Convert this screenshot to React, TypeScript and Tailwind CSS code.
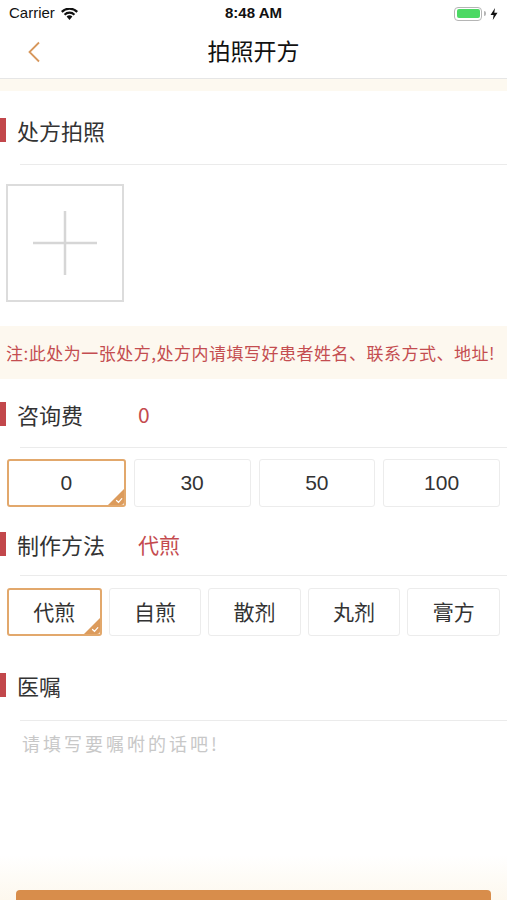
import React from 'react';

const cjk = { fontFamily: '"Noto Sans CJK SC", "Noto Sans", sans-serif' };
const latin = { fontFamily: '"Liberation Sans", "Noto Sans CJK SC", sans-serif' };

const SectionHeader: React.FC<{ label: string; value?: string }> = ({ label, value }) => (
  <div className="flex items-center h-[24px]">
    <div className="w-[6px] h-[24px] bg-[#c2474b]" />
    <div className="w-[121px] ml-[11px] text-[22px] text-[#333] leading-none" style={cjk}>
      {label}
    </div>
    {value && (
      <div className="text-[21px] text-[#c44a4e] leading-none" style={cjk}>
        {value}
      </div>
    )}
  </div>
);

const Divider = () => <div className="ml-[20px] h-px bg-[#ebebeb]" />;

const Check = () => (
  <svg className="absolute right-0 bottom-0" width="16" height="16" viewBox="0 0 16 16">
    <path d="M16 0 L16 13 Q16 16 13 16 L0 16 Z" fill="#dc9b5c" />
    <path d="M8.5 11.5 L10.5 13.3 L13.8 9.6" fill="none" stroke="#fff" strokeWidth="1.2" strokeLinecap="round" />
  </svg>
);

const Option: React.FC<{ text: string; selected?: boolean; numeric?: boolean }> = ({ text, selected, numeric }) => (
  <div
    className={`relative flex-1 h-[48px] rounded-[3px] flex items-center justify-center text-[21px] text-[#333] ${
      selected ? 'border-2 border-[#e2a86c]' : 'border border-[#ececec]'
    }`}
    style={numeric ? latin : cjk}
  >
    {text}
    {selected && <Check />}
  </div>
);

const App: React.FC = () => {
  const fees = ['0', '30', '50', '100'];
  const methods = ['代煎', '自煎', '散剂', '丸剂', '膏方'];

  return (
    <div className="w-[507px] h-[900px] overflow-hidden bg-white flex flex-col">
      {/* status bar */}
      <div className="h-[27px] grid grid-cols-3 items-center px-[9px] text-[#111]" style={latin}>
        <div className="flex items-center gap-[6px] text-[15px]">
          <span>Carrier</span>
          <svg width="17" height="12" viewBox="0 0 17 12">
            <path d="M8.5 12 L5.6 8.6 A4.4 4.4 0 0 1 11.4 8.6 Z" fill="#111" />
            <path d="M2.8 5.9 A8 8 0 0 1 14.2 5.9 L12.7 7.5 A5.8 5.8 0 0 0 4.3 7.5 Z" fill="#111" />
            <path d="M0 3.1 A12 12 0 0 1 17 3.1 L15.5 4.7 A9.8 9.8 0 0 0 1.5 4.7 Z" fill="#111" />
          </svg>
        </div>
        <div className="text-[15px] font-bold text-center">8:48 AM</div>
        <div className="flex items-center justify-end gap-[2px]">
          <div className="w-[28px] h-[14px] rounded-[4px] border border-[#b5b5b5] p-[1.5px]">
            <div className="w-full h-full rounded-[2px] bg-[#4cd964]" />
          </div>
          <div className="w-[2px] h-[5px] bg-[#b5b5b5] rounded-r-sm" />
          <svg width="8" height="12" viewBox="0 0 8 12" className="ml-[2px]">
            <path d="M5 0 L0.5 7 L3.6 7 L2.8 12 L7.5 4.8 L4.3 4.8 Z" fill="#111" />
          </svg>
        </div>
      </div>

      {/* nav bar */}
      <div className="h-[52px] relative flex items-center justify-center pb-[4px] border-b border-[#e6e6e6]">
        <svg className="absolute left-[27px] top-[14px]" width="14" height="22" viewBox="0 0 14 22">
          <path d="M12 1.5 L2.5 11 L12 20.5" fill="none" stroke="#d7975c" strokeWidth="1.8" />
        </svg>
        <div className="text-[23px] text-[#111]" style={cjk}>拍照开方</div>
      </div>
      <div className="h-[12px] bg-[#fdf9f0]" />

      <div className="flex-1">
        <div className="mt-[27px]">
          <SectionHeader label="处方拍照" />
        </div>
        <div className="mt-[22px]">
          <Divider />
        </div>
        <div className="mt-[19px] ml-[6px] w-[118px] h-[118px] border-2 border-[#dcdcdc] flex items-center justify-center">
          <svg width="64" height="64" viewBox="0 0 64 64">
            <path d="M32 0 V64 M0 32 H64" stroke="#d6d6d6" strokeWidth="2.5" />
          </svg>
        </div>

        <div className="mt-[24px] h-[53px] bg-[#fdf8ef] flex items-center pl-[6px]">
          <span className="text-[17px] text-[#c44d50] tracking-[0.5px]" style={cjk}>
            注:此处为一张处方,处方内请填写好患者姓名、联系方式、地址!
          </span>
        </div>

        <div className="mt-[23px]">
          <SectionHeader label="咨询费" value="0" />
        </div>
        <div className="mt-[21px]">
          <Divider />
        </div>
        <div className="mt-[11px] px-[7px] flex gap-[8px]">
          {fees.map((f, i) => (
            <Option key={f} text={f} selected={i === 0} numeric />
          ))}
        </div>

        <div className="mt-[25px]">
          <SectionHeader label="制作方法" value="代煎" />
        </div>
        <div className="mt-[19px]">
          <Divider />
        </div>
        <div className="mt-[12px] px-[7px] flex gap-[7px]">
          {methods.map((m, i) => (
            <Option key={m} text={m} selected={i === 0} />
          ))}
        </div>

        <div className="mt-[37px]">
          <SectionHeader label="医嘱" />
        </div>
        <div className="mt-[23px]">
          <Divider />
        </div>
        <div className="mt-[9px] ml-[22px] text-[18px] tracking-[3px] text-[#c8c8c8]" style={cjk}>
          请填写要嘱咐的话吧!
        </div>
      </div>

      {/* footer */}
      <div className="h-[45px] bg-gradient-to-b from-white to-[#fdf8ee] pt-[35px] px-[16px] shrink-0">
        <div className="h-[48px] rounded-[4px] bg-[#d88d4b]" />
      </div>
    </div>
  );
};

export default App;
